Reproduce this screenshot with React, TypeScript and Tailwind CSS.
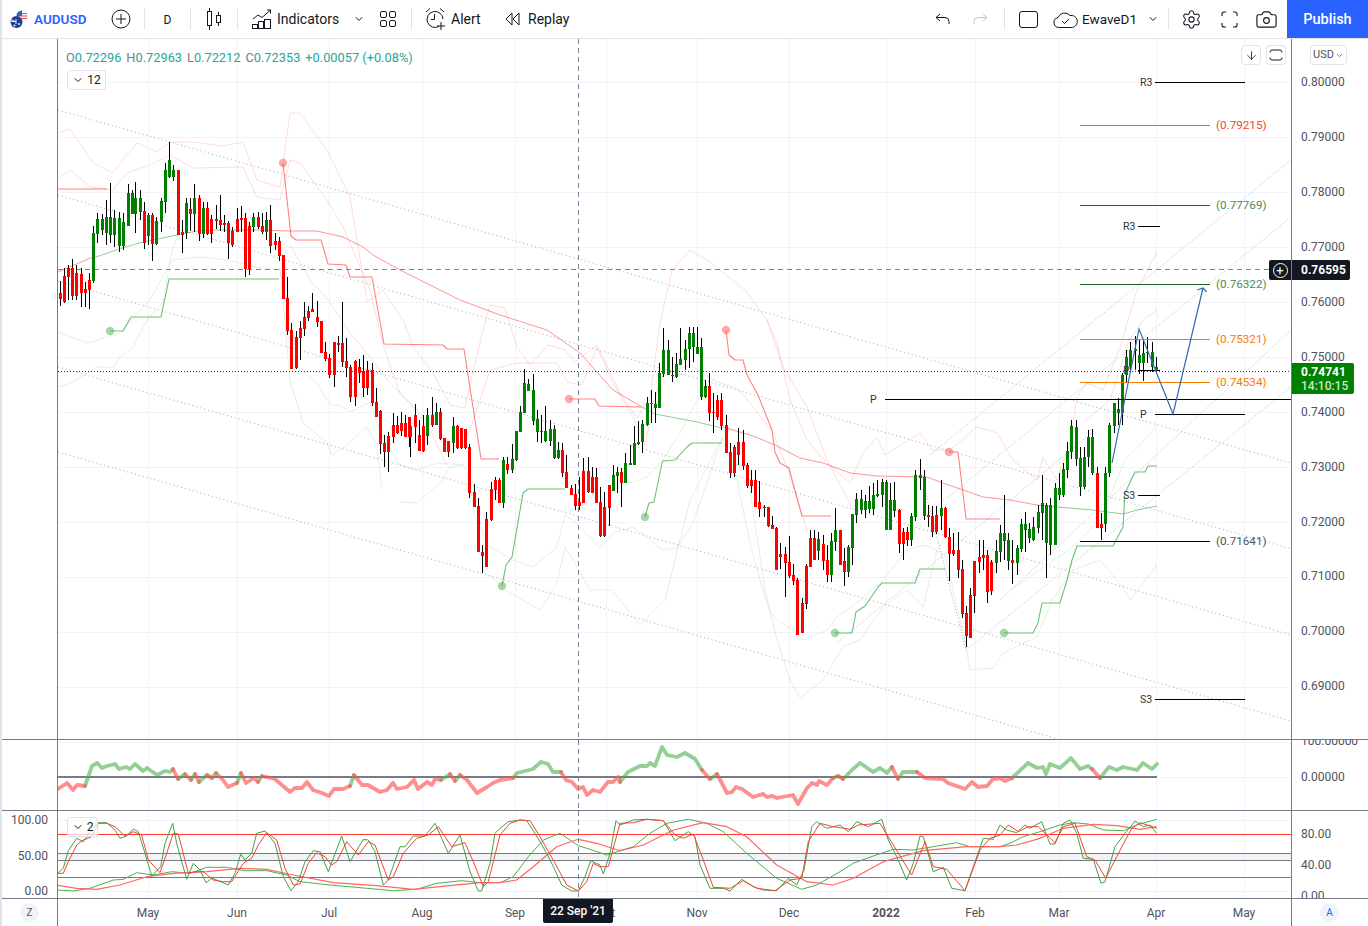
import React from 'react';
import { ChevronDown, Settings, Camera, ArrowDown } from 'lucide-react';

type Pt = [number, number];
type Candle = { x: number; t: number; b: number; wt: number; wb: number; up: number };

// crop readings come as x,y pairs measured on 3x zooms, so they get scaled back to page pixels
const pts = (ox: number, oy: number, flat: number[]): Pt[] => {
  const out: Pt[] = [];
  for (let i = 0; i < flat.length; i += 2) out.push([ox + flat[i] / 3, oy + flat[i + 1] / 3]);
  return out;
};
const line = (p: Pt[]) => p.map((q, i) => `${i ? 'L' : 'M'}${q[0].toFixed(1)} ${q[1].toFixed(1)}`).join('');

const candles = (ox: number, oy: number, rows: number[][]): Candle[] =>
  rows.map(([x, t, b, wt, wb, up]) => ({
    x: ox + x / 3,
    t: oy + t / 3,
    b: oy + b / 3,
    wt: oy + wt / 3,
    wb: oy + wb / 3,
    up,
  }));

const CANDLES: Candle[] = [
  ...candles(50, 100, [
    [31,578,597,543,617,0],[43,528,605,505,610,0],[55,505,530,495,600,0],[67,505,587,478,600,0],[79,520,587,495,600,0],[94,522,578,505,622,0],[106,567,578,545,622,0],[118,540,570,520,628,0],
    [130,400,542,378,550,1],[142,357,402,340,430,1],[157,357,390,342,405,1],[169,352,398,300,435,1],[181,352,405,250,430,1],[193,355,405,330,440,1],[208,354,438,335,455,1],[220,365,438,340,450,1],
    [233,278,377,252,377,1],[245,278,342,270,342,1],[256,294,342,245,398,1],[271,294,337,270,360,1],[283,333,430,305,447,0],[295,345,408,340,435,1],[307,345,432,340,483,0],[319,362,432,350,435,1],
    [334,303,365,295,395,1],[346,210,305,190,338,1],[358,180,230,125,235,1],[370,210,230,195,243,1],[385,210,405,210,405,0],[397,396,404,360,458,0],[409,310,398,295,416,1],[421,327,341,295,392,0],
    [433,294,342,252,395,1],[448,294,402,285,422,0],[460,324,402,305,415,1],[472,324,402,305,404,0],[484,357,402,345,428,0],[499,357,362,315,388,0],[511,360,375,285,392,0],[523,368,374,345,395,0],
    [535,369,430,362,476,0],[547,392,436,380,440,0],[562,357,396,325,395,0],[574,354,360,318,395,0],[586,354,508,340,530,0],[598,378,508,365,525,0],[610,351,381,340,395,1],[625,351,381,335,388,0],
    [637,378,395,340,402,0],[649,360,396,335,420,1],[661,360,438,315,458,0],[676,423,435,400,450,0],[688,423,467,412,482,0],
  ]),
  ...candles(270, 280, [
    [40,-75,57,-75,57,0],[52,54,152,-10,165,0],[64,150,267,130,267,0],[79,171,265,152,268,0],[91,144,173,122,240,0],[103,111,147,67,168,0],[115,93,114,78,122,0],[127,87,96,40,96,0],
    [142,111,126,63,140,0],[154,123,218,123,218,0],[166,216,237,186,243,0],[178,234,285,222,294,0],[193,186,285,186,320,0],[205,189,195,168,216,0],[217,189,246,66,260,0],[229,243,264,174,290,0],
    [241,261,351,255,366,0],[256,243,351,240,378,0],[268,261,279,237,310,0],[280,273,324,225,351,0],[292,270,324,243,345,0],[307,270,369,250,378,0],[319,366,411,324,411,0],[331,393,492,390,522,0],
    [343,489,516,465,561,0],[355,468,516,456,576,0],[370,435,471,399,489,0],[382,435,459,408,462,0],[394,429,453,396,468,0],[406,429,471,405,471,0],[418,411,471,411,501,0],
  ]),
  ...candles(400, 330, [
    [29,288,320,278,380,0],[44,255,290,222,340,0],[56,315,362,270,362,0],[68,288,362,255,365,0],[80,255,318,235,345,1],[95,255,285,202,290,0],[107,247,285,218,285,1],[119,246,328,235,330,0],
    [131,325,365,325,365,0],[143,333,366,333,382,0],[158,288,338,262,370,1],[170,288,355,285,358,0],[182,295,353,295,356,0],[194,297,353,297,356,0],[206,351,488,343,503,0],[221,487,530,462,530,0],
    [233,528,665,505,665,0],[245,665,677,645,728,0],[257,567,710,545,712,0],[272,477,570,457,572,0],[284,450,480,442,510,0],[296,450,518,445,520,0],[308,390,518,380,535,1],[320,402,420,380,432,0],
    [335,387,420,343,430,1],[347,303,390,303,392,1],[359,245,305,228,305,1],[371,160,248,118,250,1],[383,162,183,148,183,1],[398,180,272,132,285,1],[410,268,305,240,335,1],[422,303,305,255,340,1],
    [434,303,332,228,335,1],[449,296,333,270,348,1],[461,296,385,285,387,1],[473,360,383,335,388,1],[485,360,428,340,440,0],[497,426,473,375,473,0],[512,475,495,465,495,0],[524,492,528,462,540,0],
    [536,516,528,440,540,0],[548,423,518,385,518,0],[563,423,485,382,490,0],[575,440,490,410,490,0],[587,440,518,415,520,0],[599,516,618,470,620,0],[611,532,618,485,622,0],[626,465,533,465,587,0],
    [638,435,482,405,482,1],[650,426,437,410,490,1],[662,426,458,415,530,0],[674,399,458,370,458,1],[689,400,405,345,405,1],[701,340,405,288,405,1],[713,335,342,272,345,1],[725,282,336,270,370,1],
    [740,218,285,200,288,1],[752,218,222,180,280,1],[764,222,234,185,278,1],[776,130,234,100,234,1],[788,60,132,-5,140,1],[803,60,135,30,135,1],[815,135,137,80,155,1],[827,102,142,70,145,1],
    [839,88,104,-5,105,1],[854,58,90,30,120,1],[866,10,58,-10,115,1],[878,10,52,-10,95,1],[890,50,72,-10,72,1],[902,50,200,25,210,1],[916,168,200,150,205,1],[928,168,248,128,272,0],
    [940,245,248,190,310,0],[952,210,260,195,270,0],[964,210,288,190,300,0],[979,285,368,255,370,0],[991,365,428,340,445,0],[1003,350,428,345,440,0],[1015,335,375,295,405,0],[1030,335,408,300,420,0],[1042,405,468,400,475,0],
  ]),
  ...candles(750, 420, [
    [4,180,197,150,220,0],[16,180,260,150,262,0],[28,246,267,183,292,0],[43,262,265,255,292,0],[55,262,317,260,320,0],[67,316,327,288,328,0],[79,324,450,322,450,0],[91,402,410,368,447,0],
    [106,402,428,380,530,0],[118,426,467,348,475,0],[130,465,483,432,495,0],[142,480,645,475,645,0],[157,548,638,535,638,0],[169,438,552,432,566,0],[181,354,440,330,442,0],[193,354,420,330,420,0],
    [205,357,392,335,420,1],[220,372,422,345,450,0],[232,420,465,375,485,0],[244,363,465,340,485,1],[256,330,366,265,392,1],[271,330,435,330,435,0],[283,423,456,385,497,0],[295,381,456,375,470,1],
    [307,282,383,282,435,1],[319,237,285,220,308,1],[334,237,270,210,282,1],[346,243,270,225,293,1],[358,243,268,198,280,1],[370,225,267,190,285,1],[382,222,228,180,230,1],[397,186,225,178,260,1],
    [409,186,330,180,330,1],[421,240,330,190,330,1],[433,240,273,187,290,1],[448,270,372,268,400,0],[460,336,372,325,420,0],[472,336,360,322,378,0],[484,288,360,280,378,1],[496,165,290,150,304,1],
    [511,165,174,118,210,1],[523,171,288,150,300,1],[535,285,290,255,320,0],[547,288,336,258,352,0],[559,285,336,258,342,0],[574,264,288,180,330,1],[586,264,350,260,355,0],[598,351,402,325,482,0],
    [610,390,402,340,408,0],[625,390,450,335,475,0],[637,448,582,420,595,0],[649,579,648,558,680,0],[661,525,654,505,654,0],[673,423,528,422,578,0],[688,411,426,360,460,0],[700,405,414,360,450,0],
    [712,405,516,390,548,0],[724,426,513,420,525,0],[739,393,430,360,458,1],[751,339,396,315,425,1],[763,339,363,225,420,1],[775,360,423,340,450,1],[787,420,429,360,492,0],[802,384,429,375,465,1],
    [814,312,387,296,395,1],[826,312,330,275,396,1],[838,327,354,310,368,1],[850,321,360,290,362,1],[865,276,324,255,340,1],[877,250,278,165,360,1],[889,255,368,250,475,1],[901,255,375,235,405,1],
    [916,204,375,190,375,1],[928,204,225,160,240,1],[940,147,225,128,232,1],[952,93,150,65,175,1],[964,18,96,0,118,1],[979,21,118,0,138,1],[991,114,200,80,228,1],[1003,110,200,80,208,1],[1015,52,110,30,140,1],[1027,52,160,28,165,1],[1042,160,325,140,325,0],
  ]),
  ...candles(1050, 260, [
    [154,792,805,760,840,0],[166,640,792,620,815,1],[178,495,640,490,650,1],[193,430,497,430,518,1],[205,447,458,415,495,1],[217,345,458,340,495,1],[229,292,345,270,370,1],[241,270,320,245,340,1],
    [256,267,272,228,330,1],[268,285,310,240,342,1],[280,278,310,240,362,1],[292,275,280,232,310,1],[307,276,320,245,335,1],[319,320,330,292,335,1],
  ]),
];

const RED_STEPS: Pt[][] = [
  [[58,189],[107,189]],
  [[283,163],[291,236],[296,240],[321,240],[328,264],[346,265],[350,277],[372,277],[384,344],[443,345],[447,349],[464,349],[481,459],[499,459]],
  [[569,399],[595,399],[599,406],[641,407]],
  [[726,330],[729,355],[735,360],[743,360],[747,375],[758,395],[772,430],[775,452],[780,463],[789,468],[794,487],[802,516],[831,516]],
  [[949,452],[958,452],[966,519],[1000,519]],
];
const GREEN_STEPS: Pt[][] = [
  [[110,331],[123,331],[131,317],[161,317],[169,279],[279,279]],
  [[502,586],[506,565],[512,557],[515,540],[523,493],[528,489],[565,489]],
  [[645,517],[649,503],[654,502],[662,463],[663,461],[675,460],[687,447],[692,443],[722,443]],
  [[835,633],[852,633],[856,612],[865,606],[878,587],[882,583],[915,583],[920,569],[945,569]],
  [[1004,633],[1033,633],[1038,623],[1042,603],[1060,603],[1067,580],[1072,560],[1077,546],[1113,546],[1123,527],[1125,493],[1135,472],[1145,472],[1148,466],[1157,466]],
];
const MA_RED: Pt[][] = [
  [[58,272],[93,257]],
  [[257,230],[290,231],[317,231],[343,237],[363,247],[373,255],[400,270],[460,300],[500,315],[547,330],[580,353],[613,390],[642,407]],
  [[723,427],[753,436],[775,445],[800,458],[823,463],[850,473],[877,476],[927,477],[943,483],[963,490],[983,497],[1010,500],[1037,505]],
];
const MA_GREEN: Pt[][] = [
  [[93,258],[122,248],[143,242],[177,235],[197,231],[217,230],[257,230]],
  [[642,407],[655,414],[697,422],[722,428]],
  [[1037,505],[1057,507],[1093,510],[1123,514],[1137,510],[1157,506]],
];
const PALE_RED: Pt[][] = [
  [[58,133],[70,129],[80,143],[93,163],[113,173],[125,157],[137,143],[157,152],[170,142],[193,142],[223,146],[243,142],[257,180],[280,187],[290,113],[300,113],[327,150],[350,197],[367,302],[383,290],[403,320],[413,347],[433,373],[450,405],[465,408],[475,363],[483,330],[490,305],[505,308],[517,347],[530,365],[548,345],[565,350],[575,362],[597,345],[620,393],[637,418],[650,397],[660,323],[672,270],[690,250],[710,262],[745,290],[767,320],[777,343],[790,400],[807,440],[827,463],[850,483],[863,453],[877,437],[885,455],[920,433],[932,450],[950,450],[977,427],[997,433],[1013,460],[1037,480],[1043,457],[1057,480],[1070,443],[1077,397],[1087,383],[1103,390],[1120,347],[1137,290],[1157,252]],
  [[58,178],[70,170],[90,187],[113,190],[127,173],[150,165],[170,155],[193,168],[243,167],[257,197],[280,200],[290,160],[300,163],[327,200],[343,227],[370,290],[383,345],[400,393],[420,413],[433,427],[460,450],[470,430],[490,370],[517,363],[533,363],[557,363],[567,382],[582,385],[597,347],[613,383],[633,417],[645,445],[660,377],[690,365],[717,382],[737,388],[753,407],[773,433],[787,467],[807,530]],
  [[290,245],[310,280],[330,302],[350,333],[370,357],[390,383],[410,403],[430,430],[447,465]],
  [[767,320],[783,367],[807,407],[827,460],[853,510]],
  [[1083,423],[1110,400],[1128,343],[1143,320],[1157,310]],
];
const PALE_GREEN: Pt[][] = [
  [[58,332],[88,343],[107,337],[120,333],[150,300],[172,260],[200,257],[227,260],[257,267],[280,270],[283,300],[290,380],[303,423],[327,443],[332,455],[343,448],[367,427],[377,447],[382,490]],
  [[58,387],[73,382],[97,367],[113,368],[120,357],[133,347],[147,320],[163,303],[172,250],[180,230]],
  [[280,270],[300,370],[317,383],[330,405],[340,405],[350,412],[370,402],[378,427],[400,465],[417,470],[437,463],[463,465]],
  [[400,502],[417,503],[443,480],[450,467],[463,465],[468,473],[475,517],[490,547],[513,560],[533,567],[557,547],[565,515],[573,520],[600,548],[613,533],[633,527],[663,550],[677,548],[693,523],[722,438]],
  [[490,575],[505,590],[540,610],[557,583],[565,547],[573,560],[590,590],[612,590],[640,625],[665,600],[690,500],[722,438]],
  [[613,477],[630,483],[647,477],[663,460],[680,433],[697,400],[705,390]],
  [[722,438],[735,470],[750,543],[760,580],[770,612],[777,620],[797,633],[803,640],[827,630],[837,617],[860,600],[883,580],[907,550],[925,545],[945,555],[965,640],[970,670],[993,668],[1003,653],[1037,637],[1052,600],[1073,570],[1100,560],[1125,590],[1130,600],[1157,565]],
  [[750,490],[765,590],[777,640],[790,680],[800,698],[823,680],[843,647],[860,640],[883,607],[907,590],[923,607],[937,550],[950,530]],
  [[1010,590],[1040,570],[1075,545],[1100,520],[1125,460],[1140,445],[1157,425]],
];

const OSC: Pt[] = [
  [58,789],[67,783],[73,790],[77,785],[85,786],[92,766],[97,763],[102,768],[107,766],[115,764],[119,769],[126,767],[130,769],[135,764],[143,771],[147,768],[157,775],[165,771],[170,772],[173,769],[178,779],[185,774],[191,780],[195,774],[199,782],[207,775],[212,778],[216,773],[223,780],[228,787],[237,783],[241,773],[246,783],[254,778],[258,782],[262,776],[275,779],[290,792],[295,788],[302,788],[307,782],[313,790],[322,793],[329,796],[334,789],[343,789],[350,786],[354,775],[362,785],[368,785],[380,792],[387,790],[393,783],[397,789],[407,787],[414,780],[418,789],[427,782],[432,785],[435,779],[441,780],[450,774],[455,781],[460,775],[467,780],[477,793],[487,787],[493,783],[500,780],[513,778],[517,773],[533,769],[541,762],[548,764],[553,772],[561,772],[566,780],[572,782],[578,789],[583,787],[587,795],[593,790],[600,792],[608,782],[613,782],[618,777],[620,782],[628,772],[640,766],[647,766],[650,763],[655,766],[662,747],[667,755],[677,757],[685,753],[695,759],[702,770],[710,779],[717,774],[727,793],[732,792],[736,787],[742,789],[753,797],[763,794],[767,797],[772,796],[777,798],[793,795],[798,804],[807,788],[812,783],[817,785],[819,781],[827,785],[833,778],[838,776],[843,779],[853,769],[860,763],[873,772],[880,768],[887,773],[892,767],[898,779],[903,772],[917,772],[925,778],[943,779],[948,783],[965,789],[972,782],[978,787],[987,786],[993,779],[1000,778],[1005,781],[1012,778],[1028,763],[1037,768],[1043,767],[1046,774],[1050,764],[1060,768],[1071,758],[1080,769],[1088,766],[1092,769],[1100,778],[1109,767],[1117,770],[1123,767],[1137,770],[1143,763],[1152,769],[1157,764],
];
const oscSegs = (red: boolean) =>
  OSC.slice(1)
    .map((p, i) => ({ a: OSC[i], b: p }))
    .filter((s) => (s.b[1] >= 777) === red)
    .map((s) => line([s.a, s.b]))
    .join('');

const STOCH_FAST_G = [
  ...pts(0,730,[173,430,190,415,205,362,230,325,250,335,275,300,295,278,320,278,345,300,360,325,380,318,400,297,415,305,435,370,455,438,482,410,495,340,518,280,530,340,560,448,580,400,600,420,618,458,635,445,650,450,685,465,705,430,722,372,735,390,755,370,770,310,795,303,825,340,850,440,873,482,895,455,915,395,940,362,960,365,985,425,1025,318,1050,395,1090,328,1105,330,1125,365,1150,465,1165,450,1200,350,1215,350,1240,318,1275,318,1305,280,1345,370,1380,315,1410,425,1435,483,1445,483,1470,400,1485,310]),
  ...pts(500,730,[0,295,25,275,60,270,80,272,105,310,140,370,165,420,185,465,215,483,235,483,255,440,272,392,300,405,310,432,330,370,348,272,360,285,400,270,440,268,490,272,525,332,565,305,585,320,600,405,630,475,670,475,690,483,725,448,760,470,790,480,830,482,865,445,890,465,912,420,935,290,950,275,980,295,1020,285,1045,305,1070,275,1105,290,1145,268,1165,330,1190,380,1220,450,1240,400,1260,318,1270,320,1300,425,1330,412,1355,475,1395,482,1420,410,1450,325,1480,328]),
  ...pts(1000,730,[0,285,20,300,50,308,75,285,90,295,125,275,150,342,165,342,190,280,210,270,230,310,250,385,280,388,303,460,315,455,345,350,375,310,405,273,430,290,450,285,470,310]),
];
const STOCH_FAST_R = [
  ...pts(0,730,[173,430,190,430,205,395,230,345,250,330,275,320,295,280,320,280,345,290,375,318,400,305,425,315,445,390,480,428,500,370,520,310,535,312,565,430,585,425,610,425,640,450,670,455,695,455,730,400,755,385,775,345,800,308,830,330,855,415,880,465,900,462,925,400,950,368,975,380,995,405,1010,395,1040,335,1075,375,1105,335,1125,345,1165,450,1180,440,1210,370,1250,325,1285,315,1315,290,1355,350,1395,338,1420,395,1450,470,1465,455]),
  ...pts(500,730,[0,315,30,280,60,270,90,272,120,320,165,400,200,465,235,483,260,455,280,400,300,410,325,410,360,280,400,278,440,268,490,272,525,315,550,325,580,312,610,390,640,472,690,475,730,452,770,475,825,482,870,450,905,445,925,335,960,280,1000,290,1050,298,1075,285,1140,280,1180,345,1235,435,1275,335,1300,410,1340,418,1395,482,1440,360,1470,325]),
  ...pts(1000,730,[0,315,25,285,55,305,85,290,115,290,165,338,190,290,225,280,260,380,285,390,317,445,350,380,395,295,420,278,470,295]),
];
const STOCH_SLOW_G = [
  ...pts(0,730,[173,480,220,483,270,475,340,450,370,448,410,428,460,435,515,425,570,430,620,412,680,412,735,422,800,422,860,435,900,455,990,465,1100,475,1180,482,1250,478,1310,460,1385,452,1440,458]),
  ...pts(500,730,[0,458,40,440,85,380,130,330,180,310,235,347,270,358,320,375,400,350,450,310,500,280,565,268,620,280,670,305,740,370,830,445,905,478,950,465,1020,425,1060,400,1120,378,1180,358,1240,360,1370,338,1410,350]),
  ...pts(1000,730,[0,350,30,340,70,320,120,305,180,285,220,278,265,282,310,300,370,302,410,285,470,268]),
];
const STOCH_SLOW_R = [
  ...pts(0,730,[173,466,230,475,290,478,360,465,440,440,520,430,620,425,720,415,800,418,880,435,1000,458,1130,467,1240,478,1320,470,1440,458]),
  ...pts(500,730,[0,458,50,450,100,410,170,350,235,328,290,340,360,362,430,345,520,300,610,278,680,290,740,320,830,405,920,455,1000,465,1060,445,1150,395,1270,362,1400,350]),
  ...pts(1000,730,[0,350,50,345,120,325,190,295,280,283,350,287,420,298,470,290]),
];

const VGRID = [148, 237, 329, 422, 515, 606, 697, 789, 886, 975, 1059, 1156, 1244];
const HGRID = [82, 137, 192, 247, 302, 357, 412, 467, 522, 577, 632, 687];
const PRICES = ['0.80000','0.79000','0.78000','0.77000','0.76000','0.75000','0.74000','0.73000','0.72000','0.71000','0.70000','0.69000'];
const MONTHS = [
  { t: 'May', x: 148 }, { t: 'Jun', x: 237 }, { t: 'Jul', x: 329 }, { t: 'Aug', x: 422 }, { t: 'Sep', x: 515 }, { t: 'Oct', x: 606 },
  { t: 'Nov', x: 697 }, { t: 'Dec', x: 789 }, { t: '2022', x: 886, bold: true }, { t: 'Feb', x: 975 }, { t: 'Mar', x: 1059 }, { t: 'Apr', x: 1156 }, { t: 'May', x: 1244 },
];
const DOWN_LINES = [[58,110,1291,463],[58,195,1291,549],[58,281,1291,635],[58,367,1291,721],[58,452,1058,739]];
const UP_LINES = [[930,455,1291,160],[920,520,1291,217],[838,642,1095,430],[1000,600,1291,330],[966,650,1291,387]];
const LEVELS = [
  { x1: 1080, x2: 1210, y: 125, c: '#e06666', label: '(0.79215)', tc: '#f44336' },
  { x1: 1080, x2: 1210, y: 205, c: '#1b5e20', label: '(0.77769)', tc: '#4f8a53' },
  { x1: 1080, x2: 1210, y: 284, c: '#1b5e20', label: '(0.76322)', tc: '#4f8a53' },
  { x1: 1080, x2: 1210, y: 339, c: '#f57c00', label: '(0.75321)', tc: '#f57c00' },
  { x1: 1080, x2: 1210, y: 382, c: '#f57c00', label: '(0.74534)', tc: '#f57c00' },
  { x1: 1080, x2: 1210, y: 541, c: '#000000', label: '(0.71641)', tc: '#50535e' },
];
const PIVOTS = [
  { x1: 1155, x2: 1245, y: 82, t: 'R3', tx: 1140 },
  { x1: 1138, x2: 1160, y: 226, t: 'R3', tx: 1123 },
  { x1: 885, x2: 1291, y: 399, t: 'P', tx: 870 },
  { x1: 1155, x2: 1245, y: 414, t: 'P', tx: 1140 },
  { x1: 1138, x2: 1160, y: 370, t: 'P', tx: 1123 },
  { x1: 1138, x2: 1160, y: 495, t: 'S3', tx: 1123 },
  { x1: 1155, x2: 1245, y: 699, t: 'S3', tx: 1140 },
];

const Divider = ({ ml = 0 }: { ml?: number }) => (
  <div className={`h-[22px] w-px shrink-0 bg-[#e0e3eb] ${ml === 13 ? 'ml-[13px]' : ml === 14 ? 'ml-[14px]' : ''}`} />
);

const Logo = () => (
  <svg width="18" height="19" viewBox="0 0 18 19" className="shrink-0">
    <circle cx="12" cy="6" r="5.5" fill="#f4f4f4" />
    <path d="M7 3.5h10M6.5 6h11M7 8.5h10" stroke="#e25555" strokeWidth="1.1" />
    <path d="M6.5 6a5.5 5.5 0 0 1 5.5-5.5V6z" fill="#3b5bb5" />
    <circle cx="6.5" cy="12" r="6" fill="#1f3f95" />
    <path d="M1 9.5l5 2.5M6 9v5M1 11.5h5" stroke="#e8e8f4" strokeWidth="1" />
    <circle cx="9" cy="14" r="0.9" fill="#fff" />
    <circle cx="4.5" cy="15.5" r="0.9" fill="#fff" />
  </svg>
);

const CandleIcon = () => (
  <svg width="16" height="24" viewBox="0 0 16 24" fill="none" stroke="#131722" className="shrink-0">
    <rect x="1.5" y="4.5" width="4" height="14" />
    <path d="M3.5 1v3.5M3.5 18.5V23" />
    <rect x="10.5" y="8.5" width="4" height="7" />
    <path d="M12.5 5v3.5M12.5 15.5V19" />
  </svg>
);

const IndicatorsIcon = () => (
  <svg width="20" height="20" viewBox="0 0 20 20" fill="none" stroke="#131722" className="shrink-0">
    <path d="M1 10l5-4 4 2.5L18.5 1M15 1h3.5v3.5" />
    <rect x="0.5" y="15.5" width="5" height="4" />
    <rect x="6.5" y="12.5" width="5" height="7" />
    <rect x="12.5" y="10.5" width="6" height="9" />
  </svg>
);

const GridIcon = () => (
  <svg width="18" height="18" viewBox="0 0 18 18" fill="none" stroke="#131722" className="shrink-0">
    <rect x="1.5" y="1.5" width="6" height="6" rx="1.5" />
    <rect x="10.5" y="1.5" width="6" height="6" rx="1.5" />
    <rect x="1.5" y="10.5" width="6" height="6" rx="1.5" />
    <rect x="10.5" y="10.5" width="6" height="6" rx="1.5" />
  </svg>
);

const AlarmIcon = () => (
  <svg width="21" height="24" viewBox="0 0 21 24" fill="none" stroke="#131722" className="shrink-0">
    <path d="M14 19.4A8 8 0 1 1 18 12" />
    <path d="M9.5 7v5.5H6" />
    <path d="M1 5l4-3.5M19 5l-4-3.5" />
    <path d="M16 15v8M12 19h8" />
  </svg>
);

const ReplayIcon = () => (
  <svg width="15" height="14" viewBox="0 0 15 14" fill="none" stroke="#131722" className="shrink-0">
    <path d="M7 1L1 7l6 6z" />
    <path d="M14 1L8 7l6 6z" />
  </svg>
);

const CloudIcon = () => (
  <svg width="25" height="17" viewBox="0 0 25 17" fill="none" stroke="#131722" className="shrink-0">
    <path d="M6 16.5A5 5 0 0 1 5 6.6 7 7 0 0 1 17 4.5a6 6 0 0 1 2.5 12z" />
    <path d="M9 10l2.5 2.5L16 8" />
  </svg>
);

const FullIcon = () => (
  <svg width="17" height="17" viewBox="0 0 17 17" fill="none" stroke="#131722" strokeWidth="1.1" className="shrink-0">
    <path d="M1 5V3a2 2 0 0 1 2-2h2M12 1h2a2 2 0 0 1 2 2v2M16 12v2a2 2 0 0 1-2 2h-2M5 16H3a2 2 0 0 1-2-2v-2" />
  </svg>
);

const Undo = ({ flip = false, color = '#131722' }: { flip?: boolean; color?: string }) => (
  <svg width="15" height="12" viewBox="0 0 15 12" fill="none" stroke={color} className={`shrink-0 ${flip ? '-scale-x-100' : ''}`}>
    <path d="M5 1L1 4.5 5 8M1 4.5h9a4 4 0 0 1 4 4V11" />
  </svg>
);

const Toolbar = () => (
  <div className="flex h-[39px] shrink-0 items-center border-b border-[#e0e3eb] bg-white text-[14px] text-[#131722]">
    <div className="ml-[8px]">
      <Logo />
    </div>
    <span className="ml-[6px] w-[53px] pt-[1px] text-[13.5px] font-semibold text-[#2962ff]">AUDUSD</span>
    <div className="ml-[11px] flex w-[46px] justify-center">
      <svg width="20" height="20" viewBox="0 0 20 20" fill="none" stroke="#131722">
        <circle cx="10" cy="10" r="9" />
        <path d="M10 5v10M5 10h10" />
      </svg>
    </div>
    <Divider />
    <div className="flex w-[45px] justify-center pt-[1px] text-[12px]">D</div>
    <Divider />
    <div className="flex w-[46px] justify-center">
      <CandleIcon />
    </div>
    <Divider />
    <div className="ml-[14px]">
      <IndicatorsIcon />
    </div>
    <span className="ml-[5px] w-[62px] pt-[1px]">Indicators</span>
    <ChevronDown size={12} className="ml-[14px] shrink-0" />
    <div className="ml-[14px]">
      <GridIcon />
    </div>
    <Divider ml={14} />
    <div className="ml-[13px]">
      <AlarmIcon />
    </div>
    <span className="ml-[5px] w-[31px] pt-[1px]">Alert</span>
    <div className="ml-[23px]">
      <ReplayIcon />
    </div>
    <span className="ml-[8px] w-[41px] pt-[1px]">Replay</span>

    <div className="ml-auto flex items-center">
      <Undo />
      <div className="ml-[23px]">
        <Undo flip color="#c1c4cd" />
      </div>
      <div className="ml-[16px] h-[22px] w-px bg-[#e0e3eb]" />
      <div className="ml-[14px] h-[17px] w-[19px] rounded-[3px] border border-[#131722]" />
      <div className="ml-[15px]">
        <CloudIcon />
      </div>
      <span className="ml-[4px] w-[56px] pt-[1px] text-[13.5px]">EwaveD1</span>
      <ChevronDown size={12} className="ml-[9px] shrink-0" />
      <div className="ml-[9px] h-[22px] w-px bg-[#e0e3eb]" />
      <Settings size={21} strokeWidth={1.2} className="ml-[12px] shrink-0" />
      <div className="ml-[19px]">
        <FullIcon />
      </div>
      <Camera size={23} strokeWidth={1.2} className="ml-[17px] shrink-0" />
      <button className="ml-[9px] flex h-[38px] w-[81px] items-center justify-center bg-[#2962ff] pt-[1px] text-[14.5px] font-medium text-white">
        Publish
      </button>
    </div>
  </div>
);

const Crosshair = ({ y1, y2 }: { y1: number; y2: number }) => (
  <line x1="578.5" x2="578.5" y1={y1} y2={y2} stroke="#758696" strokeDasharray="5 4" />
);

const Verticals = ({ y1, y2 }: { y1: number; y2: number }) => (
  <path d={VGRID.map((x) => `M${x + 0.5} ${y1}V${y2}`).join('')} stroke="#f0f3fa" />
);

const MainChart = () => (
  <svg width="1233" height="700" viewBox="58 39 1233 700" className="block">
    <Verticals y1={39} y2={739} />
    <path d={HGRID.map((y) => `M58 ${y + 0.5}H1291`).join('')} stroke="#f0f3fa" />
    <g fill="none" strokeLinejoin="round">
      <path d={PALE_RED.map(line).join('')} stroke="#ff5252" strokeOpacity="0.2" />
      <path d={PALE_GREEN.map(line).join('')} stroke="#4caf50" strokeOpacity="0.17" />
      {DOWN_LINES.map(([x1, y1, x2, y2]) => (
        <line key={y1} x1={x1} y1={y1} x2={x2} y2={y2} stroke="#a3a6af" strokeDasharray="1 3" />
      ))}
      {UP_LINES.map(([x1, y1, x2, y2]) => (
        <line key={y2} x1={x1} y1={y1} x2={x2} y2={y2} stroke="#b8bbc4" strokeDasharray="1 2" />
      ))}
      <line x1="925" y1="490" x2="966" y2="650" stroke="#a3a6af" strokeDasharray="1 2" />
      <path d={MA_RED.map(line).join('')} stroke="#ff5252" strokeOpacity="0.62" />
      <path d={MA_GREEN.map(line).join('')} stroke="#4caf50" strokeOpacity="0.62" />
      <path d={RED_STEPS.map(line).join('')} stroke="#ff5252" strokeOpacity="0.72" strokeWidth="1.1" />
      <path d={GREEN_STEPS.map(line).join('')} stroke="#4caf50" strokeOpacity="0.8" strokeWidth="1.1" />
    </g>
    {RED_STEPS.slice(1).map((s) => (
      <circle key={s[0][0]} cx={s[0][0]} cy={s[0][1]} r="4.2" fill="#ff5252" fillOpacity="0.5" />
    ))}
    {GREEN_STEPS.map((s) => (
      <circle key={s[0][0]} cx={s[0][0]} cy={s[0][1]} r="4.2" fill="#4caf50" fillOpacity="0.5" />
    ))}
    <line x1="58" x2="1269" y1="269.5" y2="269.5" stroke="#758696" strokeDasharray="5 4" />
    <Crosshair y1={39} y2={739} />
    <line x1="58" x2="1291" y1="371.5" y2="371.5" stroke="#006400" strokeDasharray="1 2" />
    <path
      d={CANDLES.map((c) => `M${Math.round(c.x) + 0.5} ${c.wt.toFixed(1)}V${c.wb.toFixed(1)}`).join('')}
      stroke="#000"
      shapeRendering="crispEdges"
    />
    <path
      d={CANDLES.filter((c) => c.up).map((c) => `M${Math.round(c.x) - 1} ${c.t.toFixed(1)}h3V${c.b.toFixed(1)}h-3z`).join('')}
      fill="#008000"
      shapeRendering="crispEdges"
    />
    <path
      d={CANDLES.filter((c) => !c.up).map((c) => `M${Math.round(c.x) - 1} ${c.t.toFixed(1)}h3V${c.b.toFixed(1)}h-3z`).join('')}
      fill="#ff0000"
      shapeRendering="crispEdges"
    />
    {LEVELS.map((l) => (
      <g key={l.y}>
        <line x1={l.x1} x2={l.x2} y1={l.y + 0.5} y2={l.y + 0.5} stroke={l.c} />
        <text x={l.x2 + 6} y={l.y + 4} fontSize="11.7" fill={l.tc} fontFamily='"Roboto", sans-serif'>
          {l.label}
        </text>
      </g>
    ))}
    {PIVOTS.map((p) => (
      <g key={p.y}>
        <line x1={p.x1} x2={p.x2} y1={p.y + 0.5} y2={p.y + 0.5} stroke="#000" />
        <text x={p.tx} y={p.y + 4} fontSize="10.5" fill="#333" fontFamily='"Roboto", sans-serif'>
          {p.t}
        </text>
      </g>
    ))}
    <path
      d="M1112 463L1139 329L1173 414L1203 288M1197.3 290L1203 288L1206.7 292"
      fill="none"
      stroke="#3a68b0"
      strokeWidth="1.2"
    />
  </svg>
);

const OscChart = () => (
  <svg width="1233" height="70" viewBox="58 740 1233 70" className="block">
    <Verticals y1={740} y2={810} />
    <path d="M58 742.5H1291M1157 777.5H1291" stroke="#f0f3fa" />
    <line x1="58" x2="1157" y1="777" y2="777" stroke="#787b86" strokeWidth="2" />
    <Crosshair y1={740} y2={810} />
    <g fill="none" strokeWidth="3.8" strokeLinejoin="round" strokeLinecap="round">
      <path d={oscSegs(false)} stroke="#4caf50" strokeOpacity="0.6" />
      <path d={oscSegs(true)} stroke="#ff5252" strokeOpacity="0.65" />
    </g>
  </svg>
);

const StochChart = () => (
  <svg width="1233" height="87" viewBox="58 811 1233 87" className="block">
    <Verticals y1={811} y2={898} />
    <path d="M58 820.5H1291M58 891.5H1291" stroke="#f0f3fa" />
    <rect x="58" y="854" width="1233" height="6" fill="#f2f3f5" />
    <path d="M58 853.5H1291M58 860.5H1291" stroke="#787b86" />
    <path d="M58 834.5H1291" stroke="#ff3b30" />
    <path d="M58 877.5H1291" stroke="#43a047" />
    <Crosshair y1={811} y2={898} />
    <g fill="none" strokeLinejoin="round">
      <path d={line(STOCH_SLOW_G)} stroke="#4caf50" />
      <path d={line(STOCH_SLOW_R)} stroke="#f66" strokeWidth="1.2" />
      <path d={line(STOCH_FAST_G)} stroke="#43a047" />
      <path d={line(STOCH_FAST_R)} stroke="#f44336" />
    </g>
  </svg>
);

export default function App() {
  return (
    <div className="flex h-[926px] w-[1368px] flex-col overflow-hidden border-l-2 border-[#e0e3eb] bg-white font-['Roboto',sans-serif] text-[12px] text-[#50535e]">
      <Toolbar />

      <div className="flex h-[701px] shrink-0 border-b border-[#787b86]">
        <div className="w-[56px] shrink-0 border-r border-[#787b86]" />
        <div className="relative w-[1233px] shrink-0">
          <MainChart />
          <div className="absolute left-[8px] top-[9px] flex gap-[5px] text-[12.8px] text-[#26a69a]">
            <span><span className="text-[#787b86]">O</span>0.72296</span>
            <span><span className="text-[#787b86]">H</span>0.72963</span>
            <span><span className="text-[#787b86]">L</span>0.72212</span>
            <span><span className="text-[#787b86]">C</span>0.72353</span>
            <span>+0.00057 (+0.08%)</span>
          </div>
          <div className="absolute left-[9px] top-[31px] flex h-[20px] w-[39px] items-center justify-center gap-[3px] rounded-[3px] border border-[#e0e3eb] bg-white text-[12px] text-[#131722]">
            <ChevronDown size={12} />
            12
          </div>
          <div className="absolute left-[1183px] top-[6px] flex gap-[5px]">
            <div className="flex h-[20px] w-[20px] items-center justify-center rounded-[4px] border border-[#e0e3eb] bg-white">
              <ArrowDown size={13} strokeWidth={1.5} className="text-[#131722]" />
            </div>
            <div className="flex h-[20px] w-[20px] items-center justify-center rounded-[4px] border border-[#e0e3eb] bg-white">
              <svg width="14" height="12" viewBox="0 0 14 12" fill="none" stroke="#131722">
                <path d="M1 3.5V3a2 2 0 0 1 2-2h8a2 2 0 0 1 2 2v.5M1 8.5V9a2 2 0 0 0 2 2h8a2 2 0 0 0 2-2v-.5" />
              </svg>
            </div>
          </div>
          <div className="absolute left-[1211px] top-[221px] flex h-[20px] w-[22px] items-center justify-center rounded-l-[2px] bg-[#131722]">
            <div className="flex h-[15px] w-[15px] items-center justify-center rounded-full border border-white text-[13px] leading-none text-white">+</div>
          </div>
        </div>
        <div className="relative w-[76px] shrink-0 border-l border-[#787b86]">
          <div className="flex flex-col pt-[16px] pl-[9px]">
            {PRICES.map((p) => (
              <div key={p} className="flex h-[54.9px] items-center">
                {p}
              </div>
            ))}
          </div>
          <div className="absolute left-[18px] top-[6px] flex h-[20px] w-[37px] items-center justify-center gap-[1px] rounded-[4px] border border-[#e0e3eb] bg-white text-[11px] text-[#50535e]">
            USD
            <ChevronDown size={9} />
          </div>
          <div className="absolute left-0 top-[221px] flex h-[20px] w-[58px] items-center rounded-r-[2px] bg-[#131722] pl-[9px] font-bold text-white">
            0.76595
          </div>
          <div className="absolute left-0 top-[324px] flex h-[31px] w-[62px] flex-col justify-center rounded-r-[2px] bg-[#008000] pl-[9px] leading-[14px] font-bold text-white">
            <span>0.74741</span>
            <span className="font-medium text-[#c9e7c9]">14:10:15</span>
          </div>
        </div>
      </div>

      <div className="flex h-[71px] shrink-0 border-b border-[#787b86]">
        <div className="w-[56px] shrink-0 border-r border-[#787b86]" />
        <div className="w-[1233px] shrink-0">
          <OscChart />
        </div>
        <div className="w-[76px] shrink-0 overflow-hidden border-l border-[#787b86] pl-[9px]">
          <div className="-mt-[8px] flex flex-col gap-[18px]">
            <div className="flex h-[18px] items-center">100.00000</div>
            <div className="flex h-[18px] items-center">0.00000</div>
          </div>
        </div>
      </div>

      <div className="flex h-[88px] shrink-0 border-b border-[#787b86]">
        <div className="flex w-[56px] shrink-0 flex-col items-end gap-[17.5px] border-r border-[#787b86] pr-[9px]">
          <div className="flex h-[18px] items-center">100.00</div>
          <div className="flex h-[18px] items-center">50.00</div>
          <div className="flex h-[18px] items-center">0.00</div>
        </div>
        <div className="relative w-[1233px] shrink-0">
          <StochChart />
          <div className="absolute left-[9px] top-[6px] flex h-[20px] w-[31px] items-center justify-center gap-[3px] rounded-[3px] border border-[#e0e3eb] bg-white/70 text-[12px] text-[#131722]">
            <ChevronDown size={12} />
            2
          </div>
        </div>
        <div className="w-[76px] shrink-0 overflow-hidden border-l border-[#787b86] pl-[9px] pt-[13.5px]">
          <div className="flex flex-col gap-[13px]">
            <div className="flex h-[18px] items-center">80.00</div>
            <div className="flex h-[18px] items-center">40.00</div>
            <div className="flex h-[18px] items-center">0.00</div>
          </div>
        </div>
      </div>

      <div className="flex min-h-0 flex-1">
        <div className="flex w-[56px] shrink-0 items-center justify-center border-r border-[#787b86]">
          <div className="flex h-[19px] w-[19px] items-center justify-center rounded-full bg-[#f0f3fa] text-[10px] text-[#50535e]">Z</div>
        </div>
        <div className="relative w-[1233px] shrink-0">
          {MONTHS.map((m) => (
            <span
              key={m.t + m.x}
              className={`absolute top-[5px] -translate-x-1/2 ${m.bold ? 'font-bold' : ''}`}
              style={{ left: m.x - 58 }}
            >
              {m.t}
            </span>
          ))}
          <div className="absolute left-[485px] top-0 flex h-[24px] w-[70px] items-center justify-center rounded-b-[2px] bg-[#131722] font-medium text-white">
            22 Sep '21
          </div>
        </div>
        <div className="flex w-[76px] shrink-0 items-center justify-center border-l border-[#787b86]">
          <div className="flex h-[19px] w-[19px] items-center justify-center rounded-full bg-[#f0f3fa] text-[10px] text-[#2962ff]">A</div>
        </div>
      </div>
    </div>
  );
}
